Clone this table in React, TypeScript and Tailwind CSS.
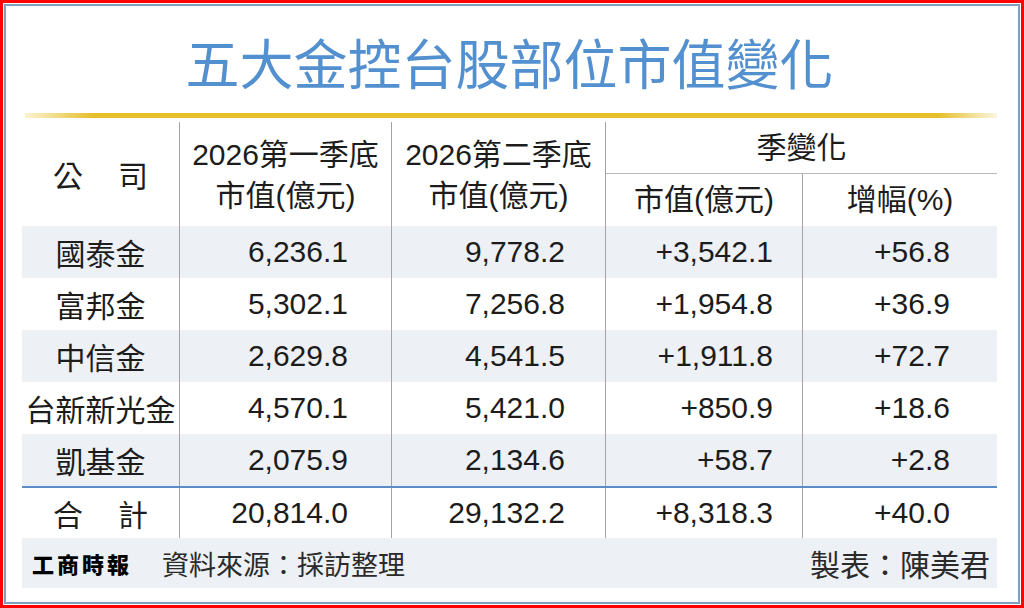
import React from "react";

const rows = [
  { name: "國泰金", a: "6,236.1", b: "9,778.2", c: "+3,542.1", d: "+56.8" },
  { name: "富邦金", a: "5,302.1", b: "7,256.8", c: "+1,954.8", d: "+36.9" },
  { name: "中信金", a: "2,629.8", b: "4,541.5", c: "+1,911.8", d: "+72.7" },
  { name: "台新新光金", a: "4,570.1", b: "5,421.0", c: "+850.9", d: "+18.6" },
  { name: "凱基金", a: "2,075.9", b: "2,134.6", c: "+58.7", d: "+2.8" },
];

const grid = "grid grid-cols-[157px_212px_214px_197px_195px]";
const vline = "border-l border-[#a3a3a3]";

export default function App() {
  return (
    <div className="w-[1024px] h-[608px] border-[3px] border-[#ff0000] bg-white p-[1px] font-['Liberation_Sans','Noto_Sans_CJK_TC',sans-serif] text-[#1c1c1c]">
      <div className="h-full border-2 border-[#7f9dbd] bg-white pl-[16px] flex flex-col">
        <div className="h-[107px] pt-[5px] flex items-center justify-center w-[975px]">
          <span className="text-[54px] leading-none font-normal text-[#5390cf] font-['Noto_Sans_CJK_TC',sans-serif]">
            五大金控台股部位市值變化
          </span>
        </div>
        <div className="ml-[3px] w-[972px] h-[5px] mb-[4px] bg-[linear-gradient(90deg,#fbf3d2_0%,#e6bf2b_7%,#e6bf2b_94%,#fbf6e2_100%)]" />
        <div className="w-[975px]">
          <div className={`${grid} grid-rows-[52px_52px] text-[30px] leading-none`}>
            <div className="row-span-2 flex items-center justify-center gap-[35px] font-['Noto_Sans_CJK_TC',sans-serif]">
              <span>公</span>
              <span>司</span>
            </div>
            <div className={`row-span-2 ${vline} flex flex-col items-center justify-center leading-[41px] pt-[2px]`}>
              <span>2026第一季底</span>
              <span>市值(億元)</span>
            </div>
            <div className={`row-span-2 ${vline} flex flex-col items-center justify-center leading-[41px] pt-[2px]`}>
              <span>2026第二季底</span>
              <span>市值(億元)</span>
            </div>
            <div className={`col-span-2 ${vline} border-b border-b-[#b8b8b8] flex items-center justify-center`}>
              <span>季變化</span>
            </div>
            <div className={`${vline} flex items-center justify-center`}>
              <span>市值(億元)</span>
            </div>
            <div className={`${vline} flex items-center justify-center`}>
              <span>增幅(%)</span>
            </div>
          </div>
          {rows.map((r, i) => (
            <div
              key={r.name}
              className={`${grid} h-[52px] text-[30px] leading-none ${i % 2 === 0 ? "bg-[#edf0f4]" : "bg-white"}`}
            >
              <div className="flex items-center justify-center font-['Noto_Sans_CJK_TC',sans-serif]">{r.name}</div>
              <div className={`${vline} flex items-center justify-end pr-[43px]`}>{r.a}</div>
              <div className={`${vline} flex items-center justify-end pr-[40px]`}>{r.b}</div>
              <div className={`${vline} flex items-center justify-end pr-[29px]`}>{r.c}</div>
              <div className={`${vline} flex items-center justify-end pr-[47px]`}>{r.d}</div>
            </div>
          ))}
          <div className="h-[2px] bg-[#5b8ec6]" />
          <div className={`${grid} h-[50px] text-[30px] leading-none`}>
            <div className="flex items-center justify-center gap-[35px] font-['Noto_Sans_CJK_TC',sans-serif]">
              <span>合</span>
              <span>計</span>
            </div>
            <div className={`${vline} flex items-center justify-end pr-[43px]`}>20,814.0</div>
            <div className={`${vline} flex items-center justify-end pr-[40px]`}>29,132.2</div>
            <div className={`${vline} flex items-center justify-end pr-[29px]`}>+8,318.3</div>
            <div className={`${vline} flex items-center justify-end pr-[47px]`}>+40.0</div>
          </div>
          <div className="h-[50px] bg-[#edf0f4] flex items-center justify-between pl-[10px] pr-[7px] font-['Noto_Sans_CJK_TC',sans-serif]">
            <div className="flex items-center">
              <span className="text-[22px] font-black tracking-[3px] text-black leading-none">工商時報</span>
              <span className="ml-[30px] text-[27px] leading-none text-[#2a2a2a]">資料來源：採訪整理</span>
            </div>
            <span className="text-[30px] leading-none text-[#2a2a2a]">製表：陳美君</span>
          </div>
        </div>
      </div>
    </div>
  );
}
